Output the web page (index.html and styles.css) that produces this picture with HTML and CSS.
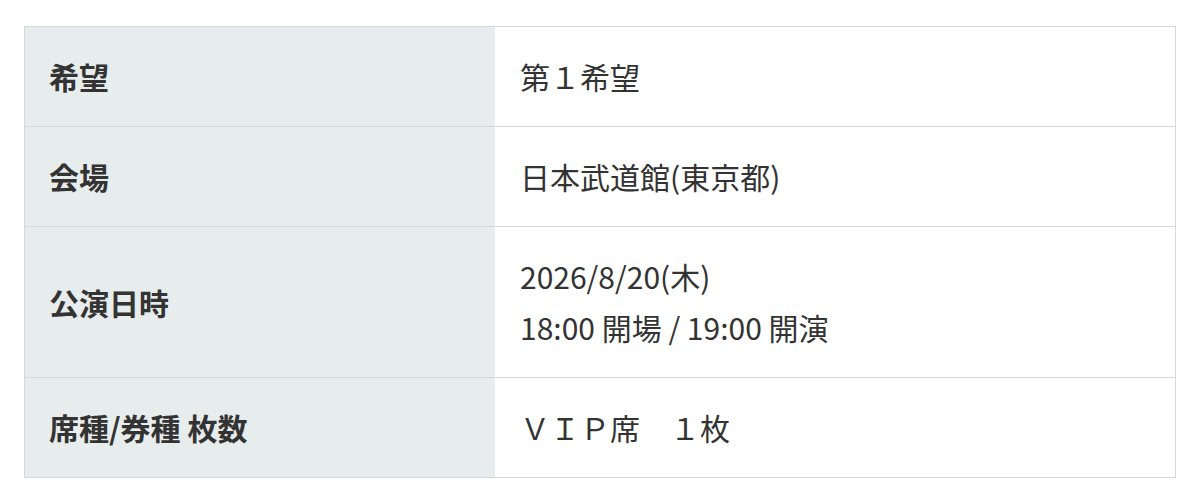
FILE: index.html
```html
<!DOCTYPE html>
<html lang="ja">
<head>
<meta charset="utf-8">
<link rel="stylesheet" href="styles.css">
</head>
<body>
<div class="wrap">
  <table class="info">
    <tr>
      <th>希望</th>
      <td>第１希望</td>
    </tr>
    <tr>
      <th>会場</th>
      <td>日本武道館(東京都)</td>
    </tr>
    <tr>
      <th>公演日時</th>
      <td>2026/8/20(木)<br>18:00 開場 / 19:00 開演</td>
    </tr>
    <tr>
      <th>席種/券種 枚数</th>
      <td>ＶＩＰ席　１枚</td>
    </tr>
  </table>
</div>
</body>
</html>
```
FILE: styles.css
```css
html, body {
  margin: 0;
  padding: 0;
  background: #fff;
}
.wrap {
  padding: 26px 24px 0 24px;
}
.info {
  width: 100%;
  border-collapse: collapse;
  border: 1px solid #d3d9d9;
  font-family: "Noto Sans CJK JP", "Noto Sans", sans-serif;
  font-size: 30px;
  line-height: 51px;
  color: #333;
}
.info th,
.info td {
  border-bottom: 1px solid #d3d9d9;
  padding: 24px 24px;
  text-align: left;
  vertical-align: middle;
}
.info th {
  width: 422px;
  background: #e7ecec;
  font-weight: bold;
  color: #333;
}
.info td {
  font-weight: normal;
  padding-left: 25px;
}
```
